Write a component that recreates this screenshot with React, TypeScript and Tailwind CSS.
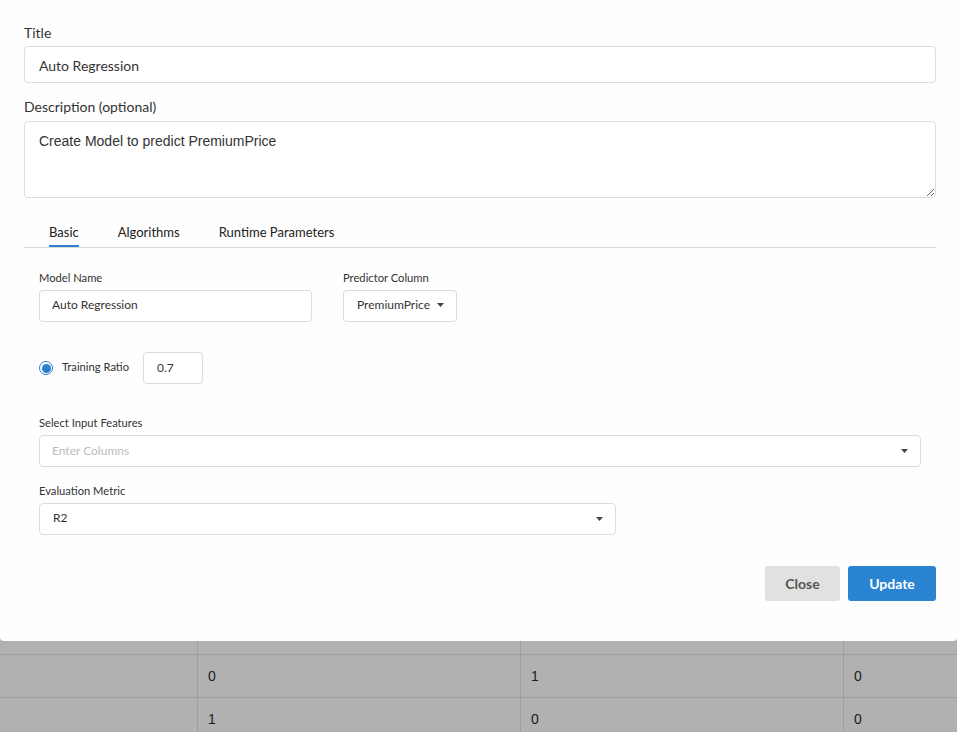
import React from "react";

// Small solid caret used by the dropdowns
const Caret = ({ className = "" }: { className?: string }) => (
  <svg width="7" height="4" viewBox="0 0 7 4" className={className}>
    <path d="M0 0 L7 0 L3.5 4 Z" fill="#444" />
  </svg>
);

const rows = [
  ["", "", "", ""],
  ["", "0", "1", "0"],
  ["", "1", "0", "0"],
];

export default function App() {
  return (
    <div className="relative h-[732px] w-full overflow-hidden bg-[#b1b1b1] font-['Liberation_Sans',Arial,sans-serif]">
      {/* Background table (dimmed by the modal overlay) */}
      <div className="pt-[612px]">
        {rows.map((r, i) => (
          <div key={i} className="flex h-[43px] border-b border-[#9d9d9d] text-[14px] text-[#1c1c1c]">
            <div className="w-[198px] border-r border-[#9d9d9d]" />
            <div className="flex w-[323px] items-center border-r border-[#9d9d9d] pl-[10px]">{r[1]}</div>
            <div className="flex w-[323px] items-center border-r border-[#9d9d9d] pl-[10px]">{r[2]}</div>
            <div className="flex flex-1 items-center pl-[10px]">{r[3]}</div>
          </div>
        ))}
      </div>

      {/* Modal */}
      <div className="absolute inset-x-0 top-0 h-[641px] rounded-b-[4px] bg-[#fefefe] pl-6 pr-[21px] pt-[23px] font-['Lato',sans-serif] text-[#333]">
        <label className="mb-[3px] block text-[14px] leading-5">Title</label>
        <input
          defaultValue="Auto Regression"
          className="block h-[37px] w-full rounded-[4px] border border-[#dcdcdc] bg-white px-[14px] pt-[1px] text-[14px] text-[#333] outline-none"
        />

        <label className="mb-1 mt-[14px] block text-[14px] leading-5">Description (optional)</label>
        <textarea
          defaultValue="Create Model to predict PremiumPrice"
          className="block h-[77px] w-full resize-y rounded-[4px] border border-[#dcdcdc] bg-white px-[14px] pt-[9px] font-['Liberation_Sans',Arial,sans-serif] text-[14px] text-[#333] outline-none"
        />

        {/* Tabs */}
        <div className="mt-[15px] flex gap-[39px] border-b border-[#dcdcdc] pl-[25px] text-[13px] text-[#222]">
          <div className="border-b-2 border-[#2b7fcc] pb-[3px] pt-[9px] leading-5">Basic</div>
          <div className="border-b-2 border-transparent pb-[3px] pt-[9px] leading-5">Algorithms</div>
          <div className="border-b-2 border-transparent pb-[3px] pt-[9px] leading-5">Runtime Parameters</div>
        </div>

        <div className="px-[15px] pt-[22px] text-[11.2px]">
          <div className="flex gap-[31px]">
            <div className="w-[273px]">
              <label className="mb-1 block leading-4">Model Name</label>
              <input
                defaultValue="Auto Regression"
                className="block h-[32px] w-full rounded-[4px] border border-[#dcdcdc] bg-white px-[12px] pb-[3px] text-[12px] text-[#333] outline-none"
              />
            </div>
            <div>
              <label className="mb-1 block leading-4">Predictor Column</label>
              <button className="flex h-[32px] w-[114px] items-center gap-[7px] rounded-[4px] border border-[#dcdcdc] bg-white pb-[2px] pl-[13px] text-[12px] text-[#333]">
                PremiumPrice
                <Caret />
              </button>
            </div>
          </div>

          {/* Training ratio */}
          <div className="mt-[30px] flex items-center">
            <span className="flex h-[14px] w-[14px] items-center justify-center rounded-full border border-[#2b7fcc] bg-white">
              <span className="h-[9px] w-[9px] rounded-full bg-[#2b7fcc]" />
            </span>
            <span className="ml-[9px] w-[81px] pb-[2px] text-[11.2px]">Training Ratio</span>
            <input
              defaultValue="0.7"
              className="block h-[32px] w-[60px] rounded-[4px] border border-[#dcdcdc] bg-white px-[13px] pb-[2px] text-[12px] text-[#333] outline-none"
            />
          </div>

          <label className="mb-1 mt-[31px] block leading-4">Select Input Features</label>
          <div className="flex h-[32px] w-full items-center justify-between rounded-[4px] border border-[#dcdcdc] bg-white pl-[12px] pr-[12px]">
            <span className="text-[12px] text-[#bbb]">Enter Columns</span>
            <Caret />
          </div>

          <label className="mb-1 mt-[16px] block leading-4">Evaluation Metric</label>
          <div className="flex h-[32px] w-[577px] items-center justify-between rounded-[4px] border border-[#dcdcdc] bg-white pl-[13px] pr-[12px]">
            <span className="pb-[2px] text-[12px] text-[#333]">R2</span>
            <Caret />
          </div>
        </div>

        {/* Footer buttons */}
        <div className="mt-[31px] flex justify-end gap-2">
          <button className="h-[35px] w-[75px] rounded-[3px] bg-[#e1e1e1] text-[14px] font-bold text-[#555]">Close</button>
          <button className="h-[35px] w-[88px] rounded-[3px] bg-[#2a84d2] text-[14px] font-bold text-white">Update</button>
        </div>
      </div>
    </div>
  );
}
